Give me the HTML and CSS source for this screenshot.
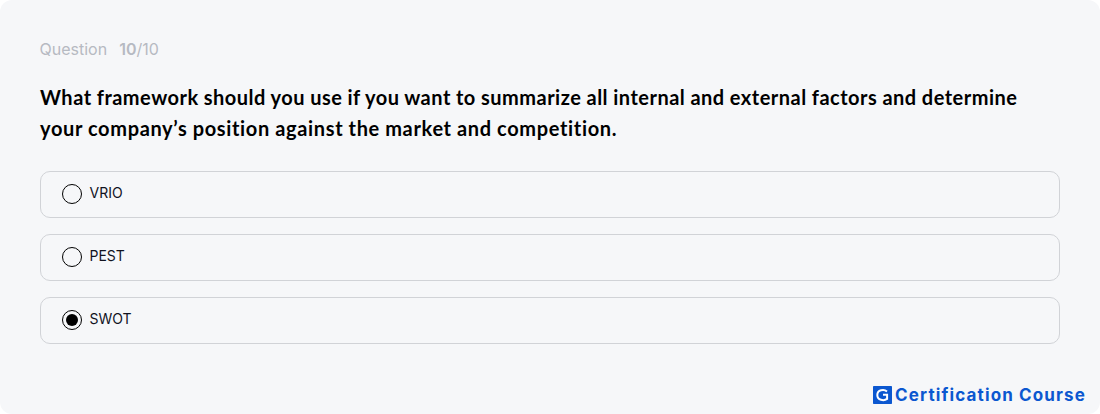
FILE: index.html
```html
<!DOCTYPE html>
<html lang="en">
<head>
<meta charset="utf-8">
<title>Question 10/10</title>
<link rel="stylesheet" href="styles.css">
</head>
<body>
<main class="card">
  <p class="progress"><span>Question</span><span class="count"><b>10</b>/10</span></p>
  <h1 class="question"><span class="line line-one">What framework should you use if you want to summarize all internal and external factors and determine</span> <span class="line line-two">your company’s position against the market and competition.</span></h1>
  <div class="options">
    <label class="option"><input class="radio" type="radio" name="answer"><span class="label">VRIO</span></label>
    <label class="option"><input class="radio" type="radio" name="answer"><span class="label">PEST</span></label>
    <label class="option"><input class="radio" type="radio" name="answer" checked><span class="label">SWOT</span></label>
  </div>
  <footer class="brand">
    <svg class="logo" viewBox="0 0 19 18" aria-hidden="true"><rect width="19" height="18" rx=".7" fill="#0b57d0"/><path d="M14 5.4C11 2.9 4.3 3.7 4.3 9s6.6 6.2 9.8 3.9V8.8H10" fill="none" stroke="#fff" stroke-width="2"/></svg>
    <span class="brand-name">Certification Course</span>
  </footer>
</main>
</body>
</html>
```

FILE: styles.css
```css
* { box-sizing: border-box; }
body { margin: 0; background: #fff; font-family: Inter, sans-serif; color: #000; }
.card { height: 414px; padding: 39px 40px 0; background: #f6f7f9; border-radius: 12px; display: flex; flex-direction: column; }
.progress { margin: 0 0 0 -.5px; display: flex; gap: 12px; height: 20px; line-height: 20px; font-size: 16px; color: #b6bac2; }
.count b { font-weight: 600; }
.question { margin: 23px 0 0; font: 700 20px/31px Lato, sans-serif; font-variant-ligatures: none; }
.line { display: block; white-space: nowrap; }
.line-one { letter-spacing: .5px; word-spacing: -.25px; }
.line-two { letter-spacing: .66px; word-spacing: -.25px; }
.options { margin-top: 27px; display: flex; flex-direction: column; gap: 16px; }
.option { height: 47px; padding: 0 21px 1px; border: 1px solid #d1d3d7; border-radius: 10px; display: flex; align-items: center; gap: 7.5px; font-size: 14px; color: #11131f; }
.label { padding-bottom: 3px; }
.radio { appearance: none; margin: 0; width: 20px; height: 20px; border: 1px solid #000; border-radius: 50%; display: grid; place-items: center; }
.radio:checked::before { content: ""; width: 12px; height: 12px; border-radius: 50%; background: #000; }
.brand { margin: 42px -25px 0 0; height: 18px; display: flex; justify-content: flex-end; align-items: center; gap: 3px; color: #0b57d0; }
.logo { width: 19px; height: 18px; }
.brand-name { margin-right: -1px; font-size: 17px; font-weight: 700; line-height: 18px; letter-spacing: 1.13px; }
```
